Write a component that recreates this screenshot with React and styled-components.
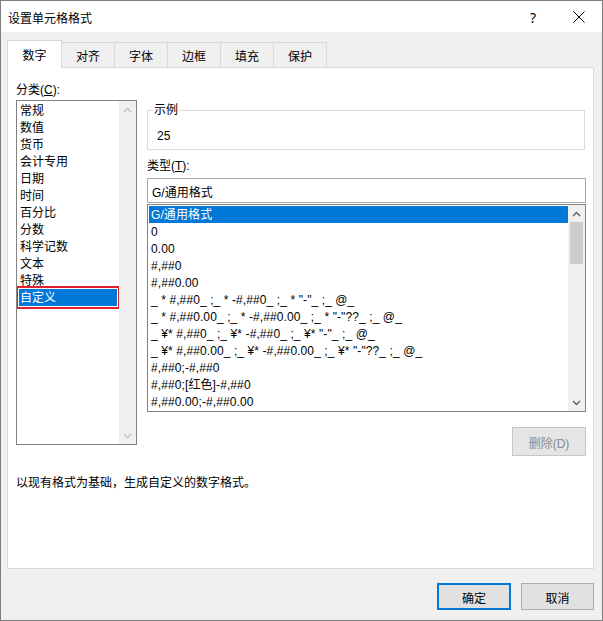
import styled, { createGlobalStyle } from "styled-components";

const GlobalStyle = createGlobalStyle`
  html, body {
    margin: 0;
    padding: 0;
    background: #ffffff;
  }
  * {
    box-sizing: border-box;
  }
  body {
    font-family: "Liberation Sans", "Noto Sans CJK SC", sans-serif;
    font-size: 12px;
    color: #000;
  }
`;

const Window = styled.div`
  width: 603px;
  height: 621px;
  border: 1px solid #7f7f7f;
  display: flex;
  flex-direction: column;
  background: #f0f0f0;
`;

const TitleBar = styled.div`
  height: 31px;
  background: #ffffff;
  display: flex;
  align-items: center;
  padding-left: 7px;
  padding-top: 1px;
  font-size: 12px;
`;

const Title = styled.div`
  flex: 1;
`;

const TitleButton = styled.div`
  width: 46px;
  height: 30px;
  display: flex;
  align-items: center;
  justify-content: center;
  font-family: "Noto Sans", sans-serif;
  font-size: 14px;
`;

const Body = styled.div`
  flex: 1;
  display: flex;
  flex-direction: column;
  padding: 8px 8px 0 6px;
`;

const Tabs = styled.div`
  display: flex;
  align-items: flex-end;
  height: 28px;
  margin-bottom: -1px;
  position: relative;
  z-index: 1;
`;

const Tab = styled.div`
  width: ${(p) => (p.$active ? "55px" : "54px")};
  height: ${(p) => (p.$active ? "28px" : "26px")};
  margin-left: ${(p) => (p.$first ? "0" : "-1px")};
  border: 1px solid #d9d9d9;
  border-bottom: ${(p) => (p.$active ? "none" : "1px solid #d9d9d9")};
  background: ${(p) => (p.$active ? "#ffffff" : "#f0f0f0")};
  display: flex;
  align-items: center;
  justify-content: center;
  padding-top: 1px;
  padding-bottom: ${(p) => (p.$active ? "1px" : "0")};
  position: relative;
  z-index: ${(p) => (p.$active ? 2 : 0)};
`;

const Panel = styled.div`
  width: 587px;
  height: 502px;
  background: #ffffff;
  border: 1px solid #d9d9d9;
  padding: 13px 8px 0 8px;
`;

const Columns = styled.div`
  display: grid;
  grid-template-columns: 121px 439px;
  column-gap: 10px;
  align-items: start;
`;

const Column = styled.div`
  display: flex;
  flex-direction: column;
`;

const Label = styled.div`
  line-height: 16px;
  height: 16px;
  padding-top: 1px;
  margin-top: ${(p) => p.$mt || 0}px;
  white-space: nowrap;
`;

const ListBox = styled.div`
  height: ${(p) => p.$h}px;
  margin-top: ${(p) => p.$mt || 0}px;
  border: 1px solid #828282;
  background: #ffffff;
  display: flex;
`;

const Rows = styled.div`
  flex: 1;
  padding: ${(p) => p.$pad};
  overflow: hidden;
`;

const Row = styled.div`
  height: 17px;
  line-height: 17px;
  padding-top: 1px;
  padding-left: ${(p) => p.$indent}px;
  white-space: nowrap;
  letter-spacing: ${(p) => p.$spacing || 0}px;
  background: ${(p) => (p.$selected ? "#0078d7" : "transparent")};
  color: ${(p) => (p.$selected ? "#ffffff" : "#000000")};
  outline: ${(p) => (p.$marked ? "2px solid #e3202e" : "none")};
  outline-offset: 1px;
`;

const ScrollBar = styled.div`
  width: 17px;
  background: #f0f0f0;
  display: flex;
  flex-direction: column;
  align-items: center;
`;

const Arrow = styled.div`
  height: 17px;
  width: 17px;
  display: flex;
  align-items: center;
  justify-content: center;
`;

const Track = styled.div`
  flex: 1;
  width: 100%;
  padding: 0 2px;
`;

const Thumb = styled.div`
  height: 42px;
  background: #cdcdcd;
`;

const Fieldset = styled.fieldset`
  margin: 21px 0 0 0;
  padding: 9px 9px 5px 9px;
  border: 1px solid #dcdcdc;
  width: 438px;
  min-width: 0;
`;

const Legend = styled.legend`
  padding: 1px 1px 0 1px;
  margin-left: -4px;
  line-height: 15px;
`;

const Sample = styled.div`
  line-height: 17px;
  height: 17px;
  padding-top: 1px;
`;

const Input = styled.div`
  margin-top: 5px;
  height: 25px;
  border: 1px solid #a8a8a8;
  background: #ffffff;
  display: flex;
  align-items: center;
  padding: 1px 0 0 4px;
`;

const ButtonRow = styled.div`
  display: flex;
  justify-content: flex-end;
  gap: 10px;
  margin-top: ${(p) => p.$mt || 0}px;
`;

const Button = styled.div`
  width: ${(p) => p.$w}px;
  height: ${(p) => p.$h}px;
  display: flex;
  align-items: center;
  justify-content: center;
  padding-top: 1px;
  background: ${(p) => (p.$disabled ? "#e5e5e5" : "#e1e1e1")};
  border: ${(p) =>
    p.$primary ? "2px solid #0078d7" : p.$disabled ? "1px solid #c6c6c6" : "1px solid #adadad"};
  color: ${(p) => (p.$disabled ? "#8c8c8c" : "#000000")};
`;

const Description = styled.div`
  margin-top: 18px;
  line-height: 16px;
  padding-top: 1px;
`;

const Footer = styled.div`
  display: flex;
  justify-content: flex-end;
  gap: 10px;
  margin-top: 14px;
`;

const categories = [
  "常规",
  "数值",
  "货币",
  "会计专用",
  "日期",
  "时间",
  "百分比",
  "分数",
  "科学记数",
  "文本",
  "特殊",
  "自定义",
];

const formats = [
  "G/通用格式",
  "0",
  "0.00",
  "#,##0",
  "#,##0.00",
  '_ * #,##0_ ;_ * -#,##0_ ;_ * "-"_ ;_ @_',
  '_ * #,##0.00_ ;_ * -#,##0.00_ ;_ * "-"??_ ;_ @_',
  '_ ¥* #,##0_ ;_ ¥* -#,##0_ ;_ ¥* "-"_ ;_ @_',
  '_ ¥* #,##0.00_ ;_ ¥* -#,##0.00_ ;_ ¥* "-"??_ ;_ @_',
  "#,##0;-#,##0",
  "#,##0;[红色]-#,##0",
  "#,##0.00;-#,##0.00",
];

const tabs = ["数字", "对齐", "字体", "边框", "填充", "保护"];

function Chevron({ down, color }) {
  return (
    <svg width="9" height="6" viewBox="0 0 9 6">
      <path
        d={down ? "M1 1 L4.5 4.5 L8 1" : "M1 5 L4.5 1.5 L8 5"}
        fill="none"
        stroke={color}
        strokeWidth="1.4"
      />
    </svg>
  );
}

export default function App() {
  return (
    <>
      <GlobalStyle />
      <Window>
        <TitleBar>
          <Title>设置单元格格式</Title>
          <TitleButton>?</TitleButton>
          <TitleButton>
            <svg width="12" height="12" viewBox="0 0 12 12">
              <path d="M0.5 0.5 L11.5 11.5 M11.5 0.5 L0.5 11.5" stroke="#000" strokeWidth="1" />
            </svg>
          </TitleButton>
        </TitleBar>
        <Body>
          <Tabs>
            {tabs.map((t, i) => (
              <Tab key={t} $active={i === 0} $first={i === 0}>
                {t}
              </Tab>
            ))}
          </Tabs>
          <Panel>
            <Columns>
              <Column>
                <Label>
                  分类(<u>C</u>):
                </Label>
                <ListBox $h={345} $mt={3}>
                  <Rows $pad="1px 2px 1px 2px">
                    {categories.map((c, i) => (
                      <Row
                        key={c}
                        $indent={1}
                        $selected={i === categories.length - 1}
                        $marked={i === categories.length - 1}
                      >
                        {c}
                      </Row>
                    ))}
                  </Rows>
                  <ScrollBar>
                    <Arrow>
                      <Chevron color="#c0c0c0" />
                    </Arrow>
                    <Track />
                    <Arrow>
                      <Chevron down color="#c0c0c0" />
                    </Arrow>
                  </ScrollBar>
                </ListBox>
              </Column>
              <Column>
                <Fieldset>
                  <Legend>示例</Legend>
                  <Sample>25</Sample>
                </Fieldset>
                <Label $mt={7}>
                  类型(<u>T</u>):
                </Label>
                <Input>G/通用格式</Input>
                <ListBox $h={208} $mt={1}>
                  <Rows $pad="1px 0 1px 1px">
                    {formats.map((f, i) => (
                      <Row key={f} $indent={2} $spacing={0.1} $selected={i === 0}>
                        {f}
                      </Row>
                    ))}
                  </Rows>
                  <ScrollBar>
                    <Arrow>
                      <Chevron color="#606060" />
                    </Arrow>
                    <Track>
                      <Thumb />
                    </Track>
                    <Arrow>
                      <Chevron down color="#606060" />
                    </Arrow>
                  </ScrollBar>
                </ListBox>
                <ButtonRow $mt={15}>
                  <Button $w={74} $h={29} $disabled>
                    删除(D)
                  </Button>
                </ButtonRow>
              </Column>
            </Columns>
            <Description>以现有格式为基础，生成自定义的数字格式。</Description>
          </Panel>
          <Footer>
            <Button $w={74} $h={27} $primary>
              确定
            </Button>
            <Button $w={73} $h={27}>
              取消
            </Button>
          </Footer>
        </Body>
      </Window>
    </>
  );
}
